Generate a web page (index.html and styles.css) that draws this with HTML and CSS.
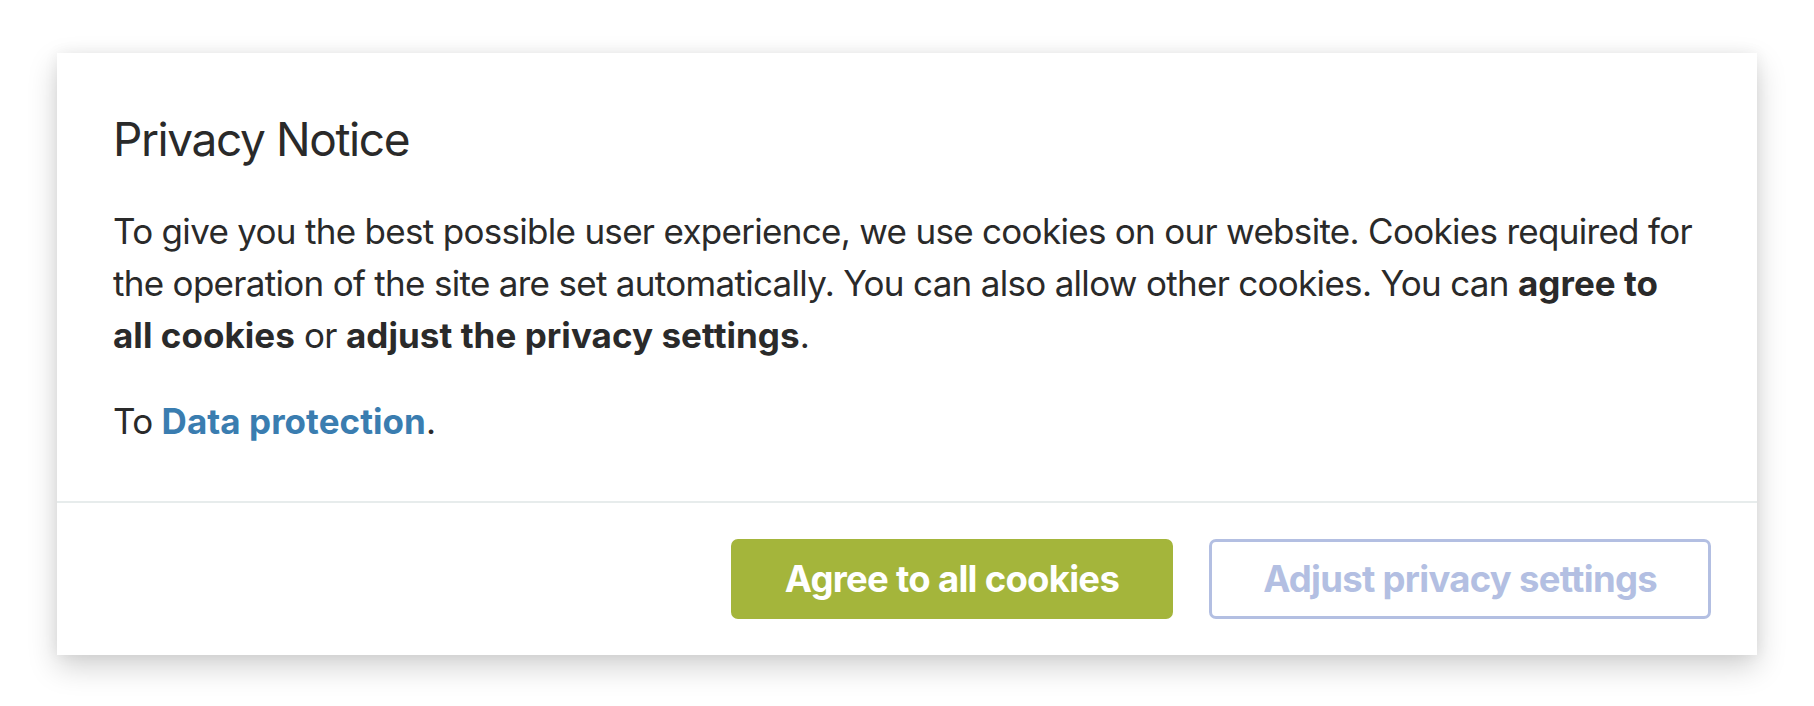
FILE: index.html
```html
<!DOCTYPE html>
<html lang="en">
<head>
<meta charset="utf-8">
<title>Privacy Notice</title>
<link rel="stylesheet" href="styles.css">
</head>
<body>
<div class="card">
  <div class="card-body">
    <h1 class="title">Privacy Notice</h1>
    <p class="text">To give you the best possible user experience, we use cookies on our website. Cookies required for the operation of the site are set automatically. You can also allow other cookies. You can <strong>agree to all cookies</strong> or <strong>adjust the privacy settings</strong>.</p>
    <p class="text">To <a class="link" href="#">Data protection</a>.</p>
  </div>
  <div class="card-footer">
    <button class="btn btn-primary">Agree to all cookies</button>
    <button class="btn btn-outline">Adjust privacy settings</button>
  </div>
</div>
</body>
</html>
```
FILE: styles.css
```css
html, body {
  margin: 0;
  background: #ffffff;
}
body {
  padding: 53px 57px;
  font-family: Inter, "Noto Sans", sans-serif;
  color: #2a2a2a;
}
.card {
  background: #ffffff;
  box-shadow: 0 12px 28px rgba(0, 0, 0, 0.18), 0 0 14px rgba(0, 0, 0, 0.06);
}
.card-body {
  padding: 58px 56px 54px 56px;
  border-bottom: 2px solid #e7ecec;
}
.title {
  margin: 0 0 38px 0;
  font-size: 46px;
  line-height: 56px;
  font-weight: 400;
  letter-spacing: -1.4px;
  color: #2a2a2a;
}
.text {
  margin: 0;
  font-size: 35px;
  line-height: 52px;
  letter-spacing: -0.7px;
}
.text + .text {
  margin-top: 34px;
}
.text strong {
  font-weight: 700;
  letter-spacing: 0.05px;
}
.link {
  color: #3a7db0;
  font-weight: 700;
  letter-spacing: 0.05px;
  text-decoration: none;
}
.card-footer {
  display: flex;
  justify-content: flex-end;
  gap: 36px;
  padding: 36px 46px 36px 56px;
}
.btn {
  height: 80px;
  border-radius: 7px;
  font-family: Inter, "Noto Sans", sans-serif;
  font-size: 36.5px;
  font-weight: 700;
  letter-spacing: -0.72px;
  padding: 0 51px;
  cursor: pointer;
}
.btn-primary {
  background: #a4b53b;
  color: #ffffff;
  border: 3px solid #a4b53b;
}
.btn-outline {
  background: #ffffff;
  color: #b3bfe2;
  border: 3px solid #b3bfe2;
}
```
